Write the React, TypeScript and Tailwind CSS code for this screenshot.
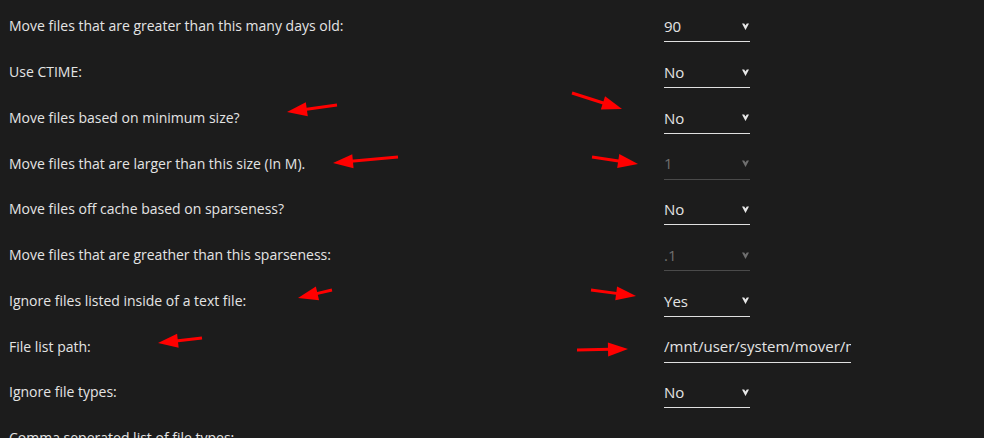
import React from "react";

type Row = {
  label: string;
  value?: string;
  kind?: "select" | "text";
  disabled?: boolean;
};

const rows: Row[] = [
  { label: "Move files that are greater than this many days old:", value: "90" },
  { label: "Use CTIME:", value: "No" },
  { label: "Move files based on minimum size?", value: "No" },
  { label: "Move files that are larger than this size (In M).", value: "1", disabled: true },
  { label: "Move files off cache based on sparseness?", value: "No" },
  { label: "Move files that are greather than this sparseness:", value: ".1", disabled: true },
  { label: "Ignore files listed inside of a text file:", value: "Yes" },
  { label: "File list path:", value: "/mnt/user/system/mover/mover_ignore.txt", kind: "text" },
  { label: "Ignore file types:", value: "No" },
  { label: "Comma seperated list of file types:" },
];

// red annotation arrows: tail -> tip
const arrows: [number, number, number, number][] = [
  [337, 105, 287, 112],
  [572, 93, 622, 109],
  [398, 157, 333, 163],
  [592, 157, 638, 164],
  [332, 290, 298, 298],
  [591, 290, 636, 296],
  [202, 338, 158, 343],
  [577, 350, 628, 349],
];

function Caret({ dim }: { dim?: boolean }) {
  return (
    <svg width="7" height="7" viewBox="0 0 7 7" className="shrink-0">
      <path d="M0 0.5 L2.2 0.5 L3.5 2.5 L4.8 0.5 L7 0.5 L3.5 7 Z" fill={dim ? "#6f6f6f" : "#e8e8e8"} />
    </svg>
  );
}

function Arrow({ x1, y1, x2, y2 }: { x1: number; y1: number; x2: number; y2: number }) {
  const dx = x2 - x1;
  const dy = y2 - y1;
  const len = Math.sqrt(dx * dx + dy * dy);
  const ux = dx / len;
  const uy = dy / len;
  const head = 20;
  const half = 7;
  const bx = x2 - ux * head;
  const by = y2 - uy * head;
  const px = -uy * half;
  const py = ux * half;
  return (
    <g>
      <line x1={x1} y1={y1} x2={bx + ux * 2} y2={by + uy * 2} stroke="#ff0000" strokeWidth="3" />
      <polygon points={`${x2},${y2} ${bx + px},${by + py} ${bx - px},${by - py}`} fill="#ff0000" />
    </g>
  );
}

export default function App() {
  return (
    <div className="relative w-[984px] h-[438px] overflow-hidden bg-[#1c1c1c] font-['Open_Sans',sans-serif] text-[14px] text-[#e4e4e4]">
      <div className="pt-[4px]">
        {rows.map((r, i) => (
          <div key={i} className="flex items-center h-[45.75px]">
            <div className="w-[664px] pl-[9px] pb-[2px] shrink-0 whitespace-nowrap">{r.label}</div>
            {r.value !== undefined && r.kind === "text" && (
              <div className="w-[187px] h-[31px] flex items-center border-b border-[#e0e0e0] overflow-hidden whitespace-nowrap text-[15px]">
                {r.value}
              </div>
            )}
            {r.value !== undefined && r.kind !== "text" && (
              <div
                className={`w-[86px] h-[31px] flex items-center justify-between pr-[1px] border-b text-[15px] ${
                  r.disabled ? "border-[#4a4a4a] text-[#6f6f6f]" : "border-[#e0e0e0]"
                }`}
              >
                <span>{r.value}</span>
                <Caret dim={r.disabled} />
              </div>
            )}
          </div>
        ))}
      </div>
      <svg className="absolute inset-0 pointer-events-none" width="984" height="438">
        {arrows.map((a, i) => (
          <Arrow key={i} x1={a[0]} y1={a[1]} x2={a[2]} y2={a[3]} />
        ))}
      </svg>
    </div>
  );
}
